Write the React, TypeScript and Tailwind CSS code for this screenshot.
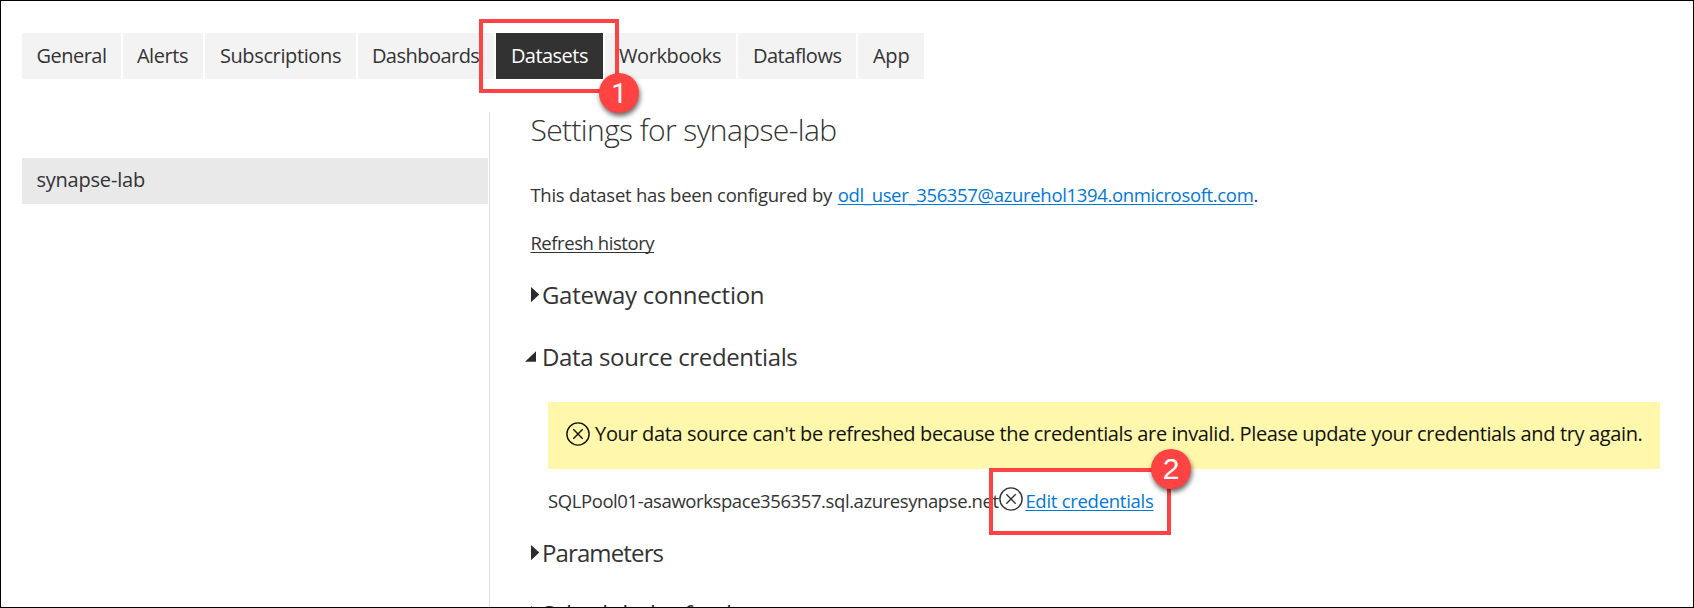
import type { ReactNode } from "react";

type Tab = { label: string; box: string; text: string; active?: boolean };

const tabs: Tab[] = [
  { label: "General", box: "w-[98.5px] mr-[2px] pl-[14px]", text: "tracking-[-0.5px]" },
  { label: "Alerts", box: "w-[80.5px] mr-[1.5px] pl-[14px]", text: "tracking-[-0.446px]" },
  { label: "Subscriptions", box: "w-[151px] mr-[2px] pl-[15px]", text: "tracking-[-0.376px]" },
  { label: "Dashboards", box: "w-[136px] mr-[2px] pl-[14px]", text: "tracking-[-0.53px]" },
  { label: "Datasets", box: "w-[107px] mr-[2px] pl-[15px]", text: "tracking-[-0.537px]", active: true },
  { label: "Workbooks", box: "w-[131px] mr-[2px] pl-[14px]", text: "tracking-[-0.373px]" },
  { label: "Dataflows", box: "w-[118px] mr-[2px] pl-[15px]", text: "tracking-[-0.45px]" },
  { label: "App", box: "w-[66px] pl-[15px]", text: "tracking-[-0.191px]" },
];

function CircleX({ className }: { className: string }) {
  return (
    <svg viewBox="0 0 24 24" className={"h-6 w-6 shrink-0 " + className} fill="none" stroke="currentColor" strokeWidth="1.4">
      <circle cx="12" cy="12" r="11.1" />
      <path d="M7.3 7.3 16.7 16.7M16.7 7.3 7.3 16.7" />
    </svg>
  );
}

function Section({ title, open, className, tracking }: { title: string; open?: boolean; className: string; tracking: string }) {
  return (
    <h2 className={"flex h-10 items-center text-[24px] leading-10 text-[#333] " + className}>
      <svg viewBox="0 0 18 40" className="ml-[-6px] h-10 w-[18px] shrink-0" fill="#2b2b2b">
        {open ? <path d="M1 24.8 12 14.2V24.8Z" /> : <path d="M7 12 15.3 19.5 7 27.3Z" />}
      </svg>
      <span className={"ml-[-0.5px] " + tracking}>{title}</span>
    </h2>
  );
}

function Badge({ children, className }: { children: ReactNode; className: string }) {
  return (
    <div className={"absolute flex h-10 w-10 items-center justify-center rounded-full bg-[#ff4343] leading-10 text-white shadow-[1px_3px_5px_rgba(0,0,0,0.6)] " + className}>
      {children}
    </div>
  );
}

export default function App() {
  return (
    <div className="relative h-[608px] w-[1694px] overflow-hidden border border-black bg-white font-['Open_Sans','Noto_Sans',sans-serif] text-[#333]">
      <nav className="ml-[21.4px] mt-8 flex h-[46.4px]">
        {tabs.map((t) => (
          <div
            key={t.label}
            className={"flex h-full shrink-0 items-center pb-[1px] text-[20px] leading-none " + t.box + (t.active ? " bg-[#323232] text-white" : " bg-[#f3f3f3]")}
          >
            <span className={"whitespace-nowrap " + t.text}>{t.label}</span>
          </div>
        ))}
      </nav>

      <div className="mt-[32.6px] flex h-[495px]">
        <aside className="w-[489px] shrink-0 border-r border-[#dcdcdc] pl-[21.4px] pt-[46px]">
          <div className="flex h-[46px] w-[465.5px] items-center bg-[#e9e9e9] pb-[2px] pl-[14px] text-[20px] leading-none tracking-[-0.203px]">
            synapse-lab
          </div>
        </aside>

        <main className="w-[1170px] shrink-0 whitespace-nowrap pl-[40.4px]">
          <h1 className="h-[33px] pt-px text-[30px] font-light leading-[33px] tracking-[-0.61px]">Settings for synapse-lab</h1>
          <p className="mt-9 flex h-7 text-[18.5px] leading-7">
            <span className="w-[307.4px] tracking-[-0.26px]">This dataset has been configured by</span>
            <a className="text-[#0078d7] underline decoration-1 underline-offset-[2px] tracking-[-0.34px] [text-decoration-skip-ink:none]">odl_user_356357@azurehol1394.onmicrosoft.com</a>
            <span>.</span>
          </p>
          <p className="mt-5 h-7 text-[18.5px] leading-7 tracking-[-0.44px]">
            <a className="underline decoration-1 underline-offset-[2px] [text-decoration-skip-ink:none]">Refresh history</a>
          </p>
          <Section className="mt-[18px]" title="Gateway connection" tracking="tracking-[-0.26px]" />
          <Section className="mt-[22px]" title="Data source credentials" tracking="tracking-[-0.35px]" open />

          <div className="ml-[17.6px] mt-[25px] flex h-[67px] w-[1111.6px] items-center bg-[#fff7ab] pl-[17.6px] text-[20px] text-[#111]">
            <CircleX className="mt-[-3px]" />
            <span className="ml-[5.5px] pb-[2px] leading-8 tracking-[-0.362px]">
              Your data source can't be refreshed because the credentials are invalid. Please update your credentials and try again.
            </span>
          </div>

          <div className="ml-[17.6px] mt-[18px] flex h-7 items-center text-[18.5px] leading-7">
            <span className="w-[451.4px] tracking-[-0.41px]">SQLPool01-asaworkspace356357.sql.azuresynapse.net</span>
            <CircleX className="mt-[-4px]" />
            <a className="ml-[2px] text-[#0078d7] underline decoration-1 underline-offset-[2px] tracking-[-0.28px]">Edit credentials</a>
          </div>

          <Section className="mt-[18px]" title="Parameters" tracking="tracking-[-0.86px]" />
          <Section className="mt-[20.8px]" title="Scheduled refresh" tracking="tracking-[-0.3px]" />
        </main>
      </div>

      <div className="absolute left-[478px] top-[18px] h-[74px] w-[140px] border-4 border-[#ff4343]" />
      <Badge className="left-[598px] top-[72px] pt-[2px] font-['Roboto',sans-serif] text-[28px]">1</Badge>
      <div className="absolute left-[988px] top-[467px] h-[67px] w-[182px] border-4 border-[#ff4343]" />
      <Badge className="left-[1150px] top-[448px] font-['Liberation_Sans',sans-serif] text-[30px]">2</Badge>
    </div>
  );
}
